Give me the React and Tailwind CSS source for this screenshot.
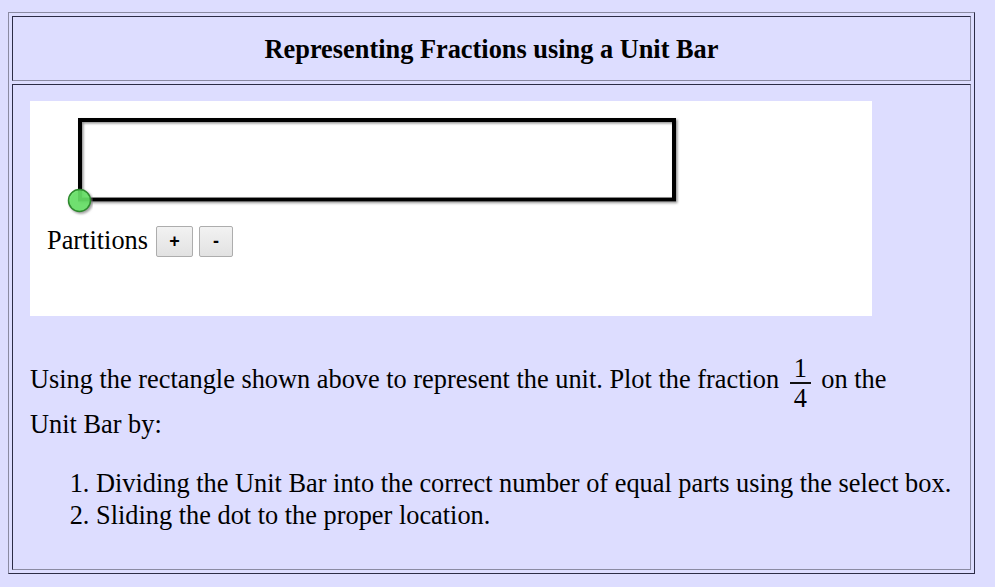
/**
 * Unit bar fraction exercise — table-style page with a drawing area.
 */

function Fraction({ top, bottom }) {
  return (
    <span className="mx-[4px] inline-flex flex-col items-center align-[11.5px]">
      <span className="leading-[20px]">{top}</span>
      <span className="mt-[3px] h-[2px] w-[21px] bg-[#111]" />
      <span className="mt-[11px] leading-[8px]">{bottom}</span>
    </span>
  );
}

function UnitBar() {
  return (
    <svg className="block" width="842" height="125" viewBox="0 0 842 125">
      <defs>
        <filter id="shade" x="-10%" y="-10%" width="120%" height="130%">
          <feDropShadow dx="1.5" dy="1.5" stdDeviation="0.9" floodColor="#777" floodOpacity="0.8" />
        </filter>
      </defs>
      <rect x="50" y="19" width="594" height="79.5" fill="none" stroke="#000" strokeWidth="4" filter="url(#shade)" />
      <circle cx="49.5" cy="99.5" r="11" fill="#62e862" fillOpacity="0.8" stroke="#2f8a2f" strokeWidth="1.5" filter="url(#shade)" />
    </svg>
  );
}

export default function App() {
  const btn =
    'flex h-[31px] items-center justify-center rounded-[2px] border border-[#adadad] bg-gradient-to-b from-[#f2f2f2] to-[#e2e2e2] font-["Liberation_Sans",Arial,sans-serif] text-[18px] font-bold text-black';

  return (
    <div className='h-screen bg-[#ddddff] pl-[8px] pt-[12px] font-["Liberation_Serif","Times_New_Roman",serif] text-[26.35px] text-black'>
      <div className="flex h-[562px] w-[967px] flex-col gap-[3px] border border-t-[#8a8aa2] border-l-[#8a8aa2] border-r-[#2c2c46] border-b-[#2c2c46] p-[3px]">
        <div className="flex h-[65px] items-center justify-center border border-t-[#2c2c46] border-l-[#2c2c46] border-r-[#8a8aa2] border-b-[#8a8aa2] pt-[2px]">
          <h1 className="font-bold leading-[30px]">Representing Fractions using a Unit Bar</h1>
        </div>

        <div className="h-[486px] border border-t-[#2c2c46] border-l-[#2c2c46] border-r-[#8a8aa2] border-b-[#8a8aa2] pl-[17px] pt-[16px]">
          <div className="flex h-[215px] w-[842px] flex-col bg-white">
            <UnitBar />
            <div className="flex items-start pl-[17px]">
              <span className="mt-[2px] leading-[26px]">Partitions</span>
              <button type="button" className={`${btn} ml-[8px] w-[37px]`}>+</button>
              <button type="button" className={`${btn} ml-[6px] w-[34px]`}>-</button>
            </div>
          </div>

          <p className="mt-[42px] max-w-[880px] leading-[44px]">
            Using the rectangle shown above to represent the unit. Plot the fraction <Fraction top="1" bottom="4" /> on the Unit Bar by:
          </p>

          <ol className="mt-[21px] list-decimal pl-[66px] leading-[32px]">
            <li>Dividing the Unit Bar into the correct number of equal parts using the select box.</li>
            <li>Sliding the dot to the proper location.</li>
          </ol>
        </div>
      </div>
    </div>
  );
}
